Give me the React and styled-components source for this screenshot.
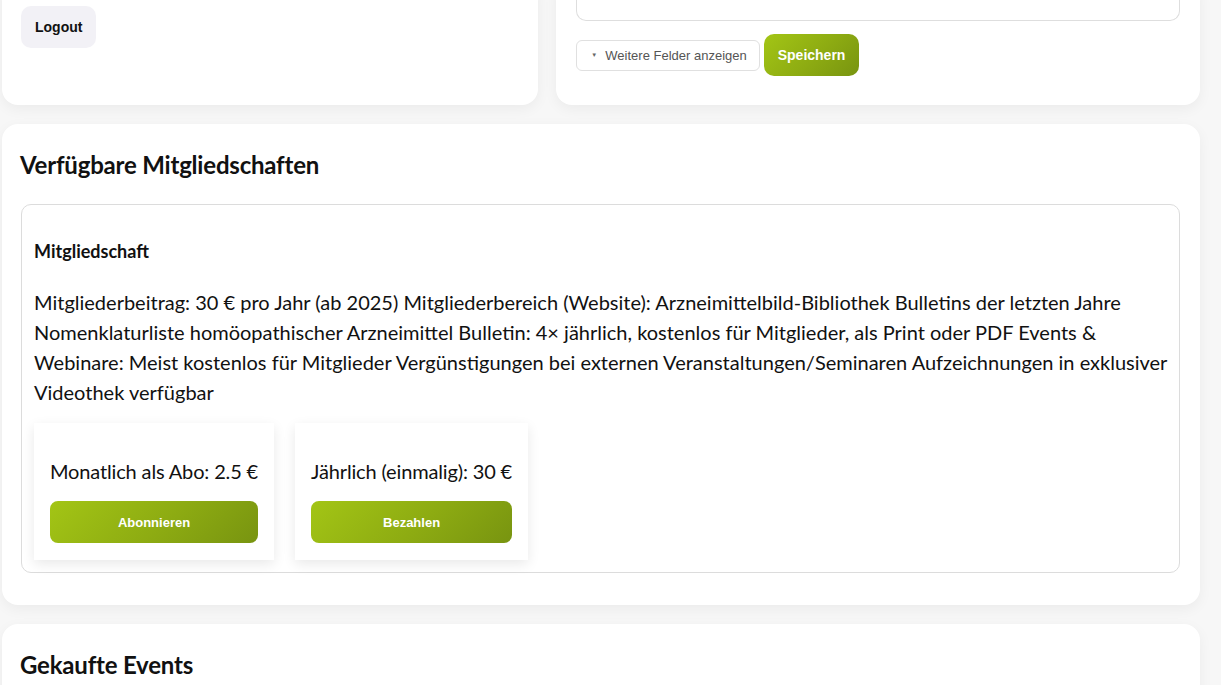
import styled, { createGlobalStyle } from 'styled-components';

const GlobalStyle = createGlobalStyle`
    body {
        margin: 0;
        background: #f7f7f7;
        font-family: "Lato", "Noto Sans", sans-serif;
        color: #111;
        overflow: hidden;
    }
`

const brandGradient = 'linear-gradient(135deg, #a3c515 0%, #8dab12 55%, #789410 100%)';

const Page = styled.div`
    margin-top: -24px;
    padding: 0 21px 40px 2px;
    display: flex;
    flex-direction: column;
    gap: 19px;
`

const TopRow = styled.div`
    display: grid;
    grid-template-columns: 5fr 6fr;
    gap: 18px;
`

const Card = styled.section`
    background: #fff;
    border-radius: 16px;
    box-shadow: 0 4px 14px rgba(0, 0, 0, 0.05);
    padding: ${(p) => p.$padding || '26px 20px 32px 19px'};
`

const GreyButton = styled.button`
    background: #f2f1f6;
    border: none;
    border-radius: 10px;
    height: 42px;
    padding: 0 14px;
    font-family: "Liberation Sans", Arial, sans-serif;
    font-weight: bold;
    font-size: 14px;
    color: #111;
    cursor: pointer;
`

const TextArea = styled.textarea`
    display: block;
    box-sizing: border-box;
    width: 100%;
    height: 25px;
    border: 1px solid #dedede;
    border-top: none;
    border-radius: 0 0 10px 10px;
    resize: none;
    outline: none;
`

const ButtonRow = styled.div`
    display: flex;
    align-items: center;
    gap: 4px;
    margin-top: 13px;
`

const ToggleButton = styled.button`
    display: flex;
    align-items: center;
    gap: 8px;
    height: 31px;
    padding: 0 12px 0 14px;
    background: #fff;
    border: 1px solid #e0e0e0;
    border-radius: 6px;
    font-family: "Liberation Sans", Arial, sans-serif;
    font-size: 13px;
    color: #555;
    cursor: pointer;

    span {
        font-size: 6px;
        color: #666;
    }
`

const GreenButton = styled.button`
    background: ${brandGradient};
    border: none;
    border-radius: ${(p) => (p.$wide ? '8px' : '10px')};
    height: 42px;
    width: ${(p) => (p.$wide ? '100%' : 'auto')};
    padding: 0 14px;
    font-family: "Liberation Sans", Arial, sans-serif;
    font-weight: bold;
    font-size: ${(p) => (p.$wide ? '13px' : '14px')};
    color: #fff;
    cursor: pointer;
`

const SectionTitle = styled.h2`
    margin: 0 0 25px -1px;
    font-size: 24px;
    line-height: 29px;
    font-weight: bold;
    letter-spacing: -0.2px;
`

const MembershipBox = styled.div`
    border: 1px solid #dcdcdc;
    border-radius: 10px;
    padding: 12px;
`

const MembershipName = styled.h3`
    margin: 23px 0 0;
    font-size: 18px;
    line-height: 22px;
    font-weight: bold;
`

const Description = styled.p`
    margin: 25px 0 0;
    font-size: 20px;
    line-height: 30px;
`

const PriceList = styled.div`
    display: flex;
    gap: 21px;
    margin-top: 16px;
`

const PriceCard = styled.div`
    background: #fff;
    box-shadow: 0 4px 12px rgba(0, 0, 0, 0.09);
    padding: 36px 16px 17px;
    display: flex;
    flex-direction: column;
    gap: 18px;
`

const PriceLabel = styled.div`
    font-size: 20px;
    line-height: 24px;
    letter-spacing: -0.15px;
`

const prices = [
    { label: 'Monatlich als Abo: 2.5 €', action: 'Abonnieren' },
    { label: 'Jährlich (einmalig): 30 €', action: 'Bezahlen' },
];

const App = () => {
    return (
        <>
            <GlobalStyle />
            <Page>
                <TopRow>
                    <Card $padding="30px 19px 57px">
                        <GreyButton>Logout</GreyButton>
                    </Card>
                    <Card $padding="20px 20px 29px">
                        <TextArea />
                        <ButtonRow>
                            <ToggleButton>
                                <span>▼</span>
                                Weitere Felder anzeigen
                            </ToggleButton>
                            <GreenButton>Speichern</GreenButton>
                        </ButtonRow>
                    </Card>
                </TopRow>

                <Card>
                    <SectionTitle>Verfügbare Mitgliedschaften</SectionTitle>
                    <MembershipBox>
                        <MembershipName>Mitgliedschaft</MembershipName>
                        <Description>
                            Mitgliederbeitrag: 30 € pro Jahr (ab 2025) Mitgliederbereich (Website): Arzneimittelbild-Bibliothek Bulletins der letzten Jahre Nomenklaturliste homöopathischer Arzneimittel Bulletin: 4× jährlich, kostenlos für Mitglieder, als Print oder PDF Events &amp; Webinare: Meist kostenlos für Mitglieder Vergünstigungen bei externen Veranstaltungen/Seminaren Aufzeichnungen in exklusiver Videothek verfügbar
                        </Description>
                        <PriceList>
                            {prices.map((p) => (
                                <PriceCard key={p.action}>
                                    <PriceLabel>{p.label}</PriceLabel>
                                    <GreenButton $wide>{p.action}</GreenButton>
                                </PriceCard>
                            ))}
                        </PriceList>
                    </MembershipBox>
                </Card>

                <Card>
                    <SectionTitle>Gekaufte Events</SectionTitle>
                </Card>
            </Page>
        </>
    );
}

export default App
